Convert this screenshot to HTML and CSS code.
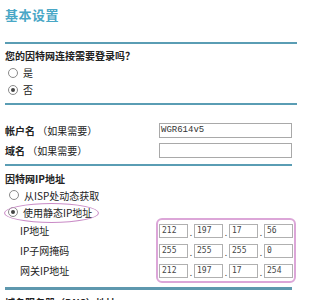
FILE: index.html
```html
<!DOCTYPE html>
<html>
<head>
<meta charset="utf-8">
<link rel="stylesheet" href="styles.css">
</head>
<body>
<div class="page">
  <div class="title">基本设置</div>
  <div class="rule"></div>

  <div class="question">您的因特网连接需要登录吗？</div>
  <div class="radio-row r-yes"><span class="radio"></span><span>是</span></div>
  <div class="radio-row r-no"><span class="radio checked"></span><span>否</span></div>
  <div class="rule r2"></div>

  <div class="account">
    <div class="field-row first">
      <div class="label"><b>帐户名</b> （如果需要）</div>
      <div class="text-input">WGR614v5</div>
    </div>
    <div class="field-row">
      <div class="label"><b>域名</b> （如果需要）</div>
      <div class="text-input"></div>
    </div>
  </div>
  <div class="rule r3"></div>

  <div class="section-head">因特网IP地址</div>
  <div class="radio-row r-isp"><span class="radio"></span><span>从ISP处动态获取</span></div>
  <div class="radio-row r-static"><span class="radio checked"></span><span>使用静态IP地址</span><span class="mark"></span></div>

  <div class="ip-block">
    <div class="ip-labels">
      <div>IP地址</div>
      <div>IP子网掩码</div>
      <div>网关IP地址</div>
    </div>
    <div class="ip-box">
      <div class="ip-row"><span class="oct">212</span><span class="dot">.</span><span class="oct">197</span><span class="dot">.</span><span class="oct">17</span><span class="dot">.</span><span class="oct">56</span></div>
      <div class="ip-row"><span class="oct">255</span><span class="dot">.</span><span class="oct">255</span><span class="dot">.</span><span class="oct">255</span><span class="dot">.</span><span class="oct">0</span></div>
      <div class="ip-row"><span class="oct">212</span><span class="dot">.</span><span class="oct">197</span><span class="dot">.</span><span class="oct">17</span><span class="dot">.</span><span class="oct">254</span></div>
    </div>
  </div>
  <div class="rule r4"></div>
  <div class="section-head bottom">域名服务器（DNS）地址</div>
</div>
</body>
</html>
```
FILE: styles.css
```css
html, body {
  margin: 0;
  padding: 0;
  background: #fff;
}
body {
  font-family: "Noto Sans CJK SC", "Noto Sans", sans-serif;
  font-size: 10px;
  color: #222;
  overflow: hidden;
}
.page {
  width: 292px;
  margin-left: 5px;
}
.title {
  height: 42px;
  line-height: 30px;
  font-size: 13px;
  font-weight: bold;
  color: #49a7c6;
  letter-spacing: 0.5px;
}
.rule {
  height: 2px;
  background: #5a9db4;
}
.question {
  margin-top: 4px;
  height: 16px;
  line-height: 16px;
  font-weight: bold;
}
.radio-row {
  position: relative;
  display: flex;
  align-items: center;
  height: 17px;
  gap: 5px;
  padding-left: 3px;
}
.radio {
  box-sizing: border-box;
  width: 10px;
  height: 10px;
  border: 1px solid #8a8a8a;
  border-radius: 50%;
  background: #fff;
  display: flex;
  align-items: center;
  justify-content: center;
}
.radio.checked::after {
  content: "";
  width: 4px;
  height: 4px;
  border-radius: 50%;
  background: #444;
}
.r2 { margin-top: 5px; }
.account {
  padding-top: 18px;
  display: flex;
  flex-direction: column;
  gap: 5px;
}
.field-row {
  display: flex;
  align-items: center;
  height: 15px;
}
.label {
  width: 154px;
}
.label b { font-weight: bold; }
.text-input {
  box-sizing: border-box;
  width: 133px;
  height: 15px;
  border: 1px solid #a9a9a9;
  font-family: "Liberation Mono", monospace;
  font-size: 9px;
  line-height: 13px;
  padding-left: 1px;
  color: #333;
}
.r3 {
  margin-top: 6px;
  width: 287px;
}
.section-head {
  margin-top: 5px;
  height: 16px;
  line-height: 16px;
  font-weight: bold;
}
.r-isp {
  height: 16px;
  padding-left: 4px;
}
.r-static {
  margin-top: 3px;
  height: 12px;
  padding-left: 3px;
}
.mark {
  position: absolute;
  left: -1px;
  top: -3px;
  width: 93px;
  height: 18px;
  border: 1.5px solid #c98bc6;
  border-radius: 50%;
}
.ip-block {
  display: flex;
}
.ip-labels {
  width: 136px;
  padding-left: 15px;
  padding-top: 6px;
  display: flex;
  flex-direction: column;
  gap: 6px;
}
.ip-labels div {
  height: 14px;
  line-height: 14px;
}
.ip-box {
  box-sizing: border-box;
  width: 140px;
  height: 65px;
  border: 2px solid #dca6d8;
  border-radius: 6px;
  padding: 4px 1px 3px 1px;
  display: flex;
  flex-direction: column;
  gap: 6px;
}
.ip-row {
  display: flex;
  height: 14px;
}
.oct {
  box-sizing: border-box;
  width: 29px;
  height: 14px;
  border: 1px solid #b0b0b0;
  font-family: "DejaVu Sans Mono", monospace;
  font-size: 8px;
  line-height: 12px;
  padding-left: 2px;
  color: #444;
}
.dot {
  width: 6px;
  text-align: center;
  font-family: "DejaVu Sans", sans-serif;
  font-size: 9px;
  line-height: 18px;
  color: #333;
}
.r4 {
  margin-top: 4px;
  width: 287px;
  height: 3px;
  background: #5e98ae;
}
.bottom {
  margin-top: 5px;
}
```
